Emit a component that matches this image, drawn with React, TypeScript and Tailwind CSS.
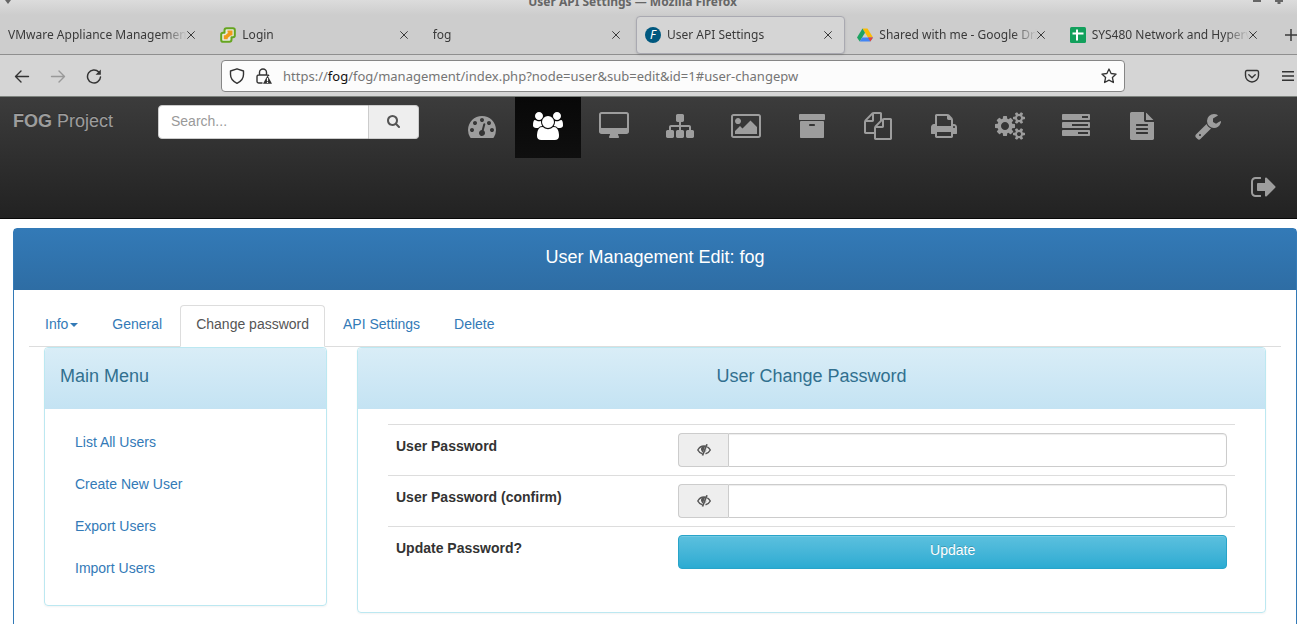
import type { ReactNode } from "react";

const PATHS = {
  search: "M1216 832q0-185-131.5-316.5t-316.5-131.5-316.5 131.5-131.5 316.5 131.5 316.5 316.5 131.5 316.5-131.5 131.5-316.5zm512 832q0 52-38 90t-90 38q-54 0-90-38l-343-342q-179 124-399 124-143 0-273.5-55.5t-225-150-150-225-55.5-273.5 55.5-273.5 150-225 225-150 273.5-55.5 273.5 55.5 225 150 150 225 55.5 273.5q0 220-124 399l343 343q37 37 37 90z",
  dashboard: "M384 1152q0-53-37.5-90.5t-90.5-37.5-90.5 37.5-37.5 90.5 37.5 90.5 90.5 37.5 90.5-37.5 37.5-90.5zm192-448q0-53-37.5-90.5t-90.5-37.5-90.5 37.5-37.5 90.5 37.5 90.5 90.5 37.5 90.5-37.5 37.5-90.5zm428 481l101-382q6-26-7.5-48.5t-38.5-29.5-48 6.5-30 39.5l-101 382q-60 5-107 43.5t-63 98.5q-20 77 20 146t117 89 146-20 89-117q16-60-6-117t-72-91zm660-33q0-53-37.5-90.5t-90.5-37.5-90.5 37.5-37.5 90.5 37.5 90.5 90.5 37.5 90.5-37.5 37.5-90.5zm-640-640q0-53-37.5-90.5t-90.5-37.5-90.5 37.5-37.5 90.5 37.5 90.5 90.5 37.5 90.5-37.5 37.5-90.5zm448 192q0-53-37.5-90.5t-90.5-37.5-90.5 37.5-37.5 90.5 37.5 90.5 90.5 37.5 90.5-37.5 37.5-90.5zm320 448q0 261-141 483-19 29-54 29h-1402q-35 0-54-29-141-221-141-483 0-182 71-348t191-286 286-191 348-71 348 71 286 191 191 286 71 348z",
  users: "M593 896q-162 5-265 128h-134q-82 0-138-40.5t-56-118.5q0-353 124-353 6 0 43.5 21t97.5 42.5 119 21.5q67 0 133-23-5 37-5 66 0 139 81 256zm1071 637q0 120-73 189.5t-194 69.5h-874q-121 0-194-69.5t-73-189.5q0-53 3.5-103.5t14-109 26.5-108.5 43-97.5 62-81 85.5-53.5 111.5-20q10 0 43 21.5t73 48 107 48 135 21.5 135-21.5 107-48 73-48 43-21.5q61 0 111.5 20t85.5 53.5 62 81 43 97.5 26.5 108.5 14 109 3.5 103.5zm-1024-1277q0 106-75 181t-181 75-181-75-75-181 75-181 181-75 181 75 75 181zm704 384q0 159-112.5 271.5t-271.5 112.5-271.5-112.5-112.5-271.5 112.5-271.5 271.5-112.5 271.5 112.5 112.5 271.5zm576 225q0 78-56 118.5t-138 40.5h-134q-103-123-265-128 81-117 81-256 0-29-5-66 66 23 133 23 59 0 119-21.5t97.5-42.5 43.5-21q124 0 124 353zm-128-609q0 106-75 181t-181 75-181-75-75-181 75-181 181-75 181 75 75 181z",
  desktop: "M1792 992v-832q0-13-9.5-22.5t-22.5-9.5h-1600q-13 0-22.5 9.5t-9.5 22.5v832q0 13 9.5 22.5t22.5 9.5h1600q13 0 22.5-9.5t9.5-22.5zm128-832v1088q0 66-47 113t-113 47h-544q0 37 16 77.5t32 71 16 43.5q0 26-19 45t-45 19h-512q-26 0-45-19t-19-45q0-14 16-44t32-70 16-78h-544q-66 0-113-47t-47-113v-1088q0-66 47-113t113-47h1600q66 0 113 47t47 113z",
  sitemap: "M1792 1248v320q0 40-28 68t-68 28h-320q-40 0-68-28t-28-68v-320q0-40 28-68t68-28h96v-192h-512v192h96q40 0 68 28t28 68v320q0 40-28 68t-68 28h-320q-40 0-68-28t-28-68v-320q0-40 28-68t68-28h96v-192h-512v192h96q40 0 68 28t28 68v320q0 40-28 68t-68 28h-320q-40 0-68-28t-28-68v-320q0-40 28-68t68-28h96v-192q0-52 38-90t90-38h512v-192h-96q-40 0-68-28t-28-68v-320q0-40 28-68t68-28h320q40 0 68 28t28 68v320q0 40-28 68t-68 28h-96v192h512q52 0 90 38t38 90v192h96q40 0 68 28t28 68z",
  image: "M640 576q0 80-56 136t-136 56-136-56-56-136 56-136 136-56 136 56 56 136zm1024 384v448h-1408v-192l320-320 160 160 512-512zm96-704h-1600q-13 0-22.5 9.5t-9.5 22.5v1216q0 13 9.5 22.5t22.5 9.5h1600q13 0 22.5-9.5t9.5-22.5v-1216q0-13-9.5-22.5t-22.5-9.5zm160 32v1216q0 66-47 113t-113 47h-1600q-66 0-113-47t-47-113v-1216q0-66 47-113t113-47h1600q66 0 113 47t47 113z",
  archive: "M1088 832q0-26-19-45t-45-19h-256q-26 0-45 19t-19 45 19 45 45 19h256q26 0 45-19t19-45zm576-192v960q0 26-19 45t-45 19h-1408q-26 0-45-19t-19-45v-960q0-26 19-45t45-19h1408q26 0 45 19t19 45zm64-448v256q0 26-19 45t-45 19h-1536q-26 0-45-19t-19-45v-256q0-26 19-45t45-19h1536q26 0 45 19t19 45z",
  files: "M1696 384q40 0 68 28t28 68v1216q0 40-28 68t-68 28h-960q-40 0-68-28t-28-68v-288h-544q-40 0-68-28t-28-68v-672q0-40 20-88t48-76l408-408q28-28 76-48t88-20h416q40 0 68 28t28 68v328q68-40 128-40h416zm-544 213l-299 299h299v-299zm-640-384l-299 299h299v-299zm196 647l316-316v-416h-384v416q0 40-28 68t-68 28h-416v640h512v-256q0-40 20-88t48-76zm956 804v-1152h-384v416q0 40-28 68t-68 28h-416v640h896z",
  print: "M448 1536h896v-256h-896v256zm0-640h896v-384h-160q-40 0-68-28t-28-68v-160h-640v640zm1152 64q0-26-19-45t-45-19-45 19-19 45 19 45 45 19 45-19 19-45zm128 0v416q0 13-9.5 22.5t-22.5 9.5h-224v160q0 40-28 68t-68 28h-960q-40 0-68-28t-28-68v-160h-224q-13 0-22.5-9.5t-9.5-22.5v-416q0-79 56.5-135.5t135.5-56.5h64v-544q0-40 28-68t68-28h672q40 0 88 20t76 48l152 152q28 28 48 76t20 88v256h64q79 0 135.5 56.5t56.5 135.5z",
  cogs: "M896 896q0-106-75-181t-181-75-181 75-75 181 75 181 181 75 181-75 75-181zm768 512q0-52-38-90t-90-38-90 38-38 90q0 53 37.5 90.5t90.5 37.5 90.5-37.5 37.5-90.5zm0-1024q0-52-38-90t-90-38-90 38-38 90q0 53 37.5 90.5t90.5 37.5 90.5-37.5 37.5-90.5zm-384 421v185q0 10-7 19.5t-16 10.5l-155 24q-11 35-32 76 34 48 90 115 7 11 7 20 0 12-7 19-23 30-82.5 89.5t-78.5 59.5q-11 0-21-7l-115-90q-37 19-77 31-11 108-23 155-7 24-30 24h-186q-11 0-20-7.5t-10-17.5l-23-153q-34-10-75-31l-118 89q-7 7-20 7-11 0-21-8-144-133-144-160 0-9 7-19 10-14 41-53t47-61q-23-44-35-82l-152-24q-10-1-17-9.5t-7-19.5v-185q0-10 7-19.5t16-10.5l155-24q11-35 32-76-34-48-90-115-7-11-7-20 0-12 7-20 22-30 82-89t79-59q11 0 21 7l115 90q34-18 77-32 11-108 23-154 7-24 30-24h186q11 0 20 7.5t10 17.5l23 153q34 10 75 31l118-89q8-7 20-7 11 0 21 8 144 133 144 160 0 8-7 19-12 16-42 54t-45 60q23 48 34 82l152 23q10 2 17 10.5t7 19.5zm640 533v140q0 16-149 31-12 27-30 52 51 113 51 138 0 4-4 7-122 71-124 71-8 0-46-47t-52-68q-20 2-30 2t-30-2q-14 21-52 68t-46 47q-2 0-124-71-4-3-4-7 0-25 51-138-18-25-30-52-149-15-149-31v-140q0-16 149-31 13-29 30-52-51-113-51-138 0-4 4-7 4-2 35-20t59-34 30-16q8 0 46 46.5t52 67.5q20-2 30-2t30 2q51-71 92-112l6-2q4 0 124 70 4 3 4 7 0 25-51 138 17 23 30 52 149 15 149 31zm0-1024v140q0 16-149 31-12 27-30 52 51 113 51 138 0 4-4 7-122 71-124 71-8 0-46-47t-52-68q-20 2-30 2t-30-2q-14 21-52 68t-46 47q-2 0-124-71-4-3-4-7 0-25 51-138-18-25-30-52-149-15-149-31v-140q0-16 149-31 13-29 30-52-51-113-51-138 0-4 4-7 4-2 35-20t59-34 30-16q8 0 46 46.5t52 67.5q20-2 30-2t30 2q51-71 92-112l6-2q4 0 124 70 4 3 4 7 0 25-51 138 17 23 30 52 149 15 149 31z",
  tasks: "M1024 1408h640v-128h-640v128zm-384-512h1024v-128h-1024v128zm640-512h384v-128h-384v128zm512 832v256q0 26-19 45t-45 19h-1664q-26 0-45-19t-19-45v-256q0-26 19-45t45-19h1664q26 0 45 19t19 45zm0-512v256q0 26-19 45t-45 19h-1664q-26 0-45-19t-19-45v-256q0-26 19-45t45-19h1664q26 0 45 19t19 45zm0-512v256q0 26-19 45t-45 19h-1664q-26 0-45-19t-19-45v-256q0-26 19-45t45-19h1664q26 0 45 19t19 45z",
  report: "M1596 476q14 14 28 36h-472v-472q22 14 36 28zm-476 164h544v1056q0 40-28 68t-68 28h-1344q-40 0-68-28t-28-68v-1600q0-40 28-68t68-28h800v544q0 40 28 68t68 28zm160 736v-64q0-14-9-23t-23-9h-704q-14 0-23 9t-9 23v64q0 14 9 23t23 9h704q14 0 23-9t9-23zm0-256v-64q0-14-9-23t-23-9h-704q-14 0-23 9t-9 23v64q0 14 9 23t23 9h704q14 0 23-9t9-23zm0-256v-64q0-14-9-23t-23-9h-704q-14 0-23 9t-9 23v64q0 14 9 23t23 9h704q14 0 23-9t9-23z",
  wrench: "M448 1472q0-26-19-45t-45-19-45 19-19 45 19 45 45 19 45-19 19-45zm644-420l-682 682q-37 37-90 37-52 0-91-37l-106-108q-38-36-38-90 0-53 38-91l681-681q39 98 114.5 173.5t173.5 114.5zm634-435q0 39-23 106-47 134-164.5 217.5t-258.5 83.5q-185 0-316.5-131.5t-131.5-316.5 131.5-316.5 316.5-131.5q58 0 121.5 16.5t107.5 46.5q16 11 16 28t-16 28l-293 169v224l193 107q5-3 79-48.5t135.5-81 70.5-35.5q15 0 23.5 10t8.500 25z",
  signOut: "M704 1440q0 4 1 20t.5 26.5-3 23.5-10 19.5-20.5 6.5h-320q-119 0-203.5-84.5t-84.5-203.5v-704q0-119 84.5-203.5t203.5-84.5h320q13 0 22.5 9.5t9.5 22.5q0 4 1 20t.5 26.5-3 23.5-10 19.5-20.5 6.5h-320q-66 0-113 47t-47 113v704q0 66 47 113t113 47h312l11.5 1 11.5 3 8 5.5 7 9 2 13.5zm928-544q0 26-19 45l-544 544q-19 19-45 19t-45-19-19-45v-288h-448q-26 0-45-19t-19-45v-384q0-26 19-45t45-19h448v-288q0-26 19-45t45-19 45 19l544 544q19 19 19 45z",
};

type IconName = keyof typeof PATHS;

const NAV: { icon: IconName; label: string; wide?: boolean; active?: boolean }[] = [
  { icon: "dashboard", label: "Dashboard" },
  { icon: "users", label: "Users", wide: true, active: true },
  { icon: "desktop", label: "Hosts", wide: true },
  { icon: "sitemap", label: "Groups" },
  { icon: "image", label: "Images", wide: true },
  { icon: "archive", label: "Storage" },
  { icon: "files", label: "Snapins" },
  { icon: "print", label: "Printers" },
  { icon: "cogs", label: "Services", wide: true },
  { icon: "tasks", label: "Tasks" },
  { icon: "report", label: "Reports" },
  { icon: "wrench", label: "Configuration" },
];

function NavIcon({ icon, wide }: { icon: IconName; wide?: boolean }) {
  return (
    <svg
      aria-hidden="true"
      viewBox={wide ? "0 0 1920 1792" : "0 0 1792 1792"}
      className={wide ? "h-7 w-[30px] fill-current" : "size-7 fill-current"}
    >
      <path d={PATHS[icon]} />
    </svg>
  );
}

function CloseButton() {
  return (
    <button type="button" aria-label="Close tab" className="shrink-0 text-[#3a3a3a]">
      <svg viewBox="0 0 8 8" className="size-2" stroke="currentColor" fill="none">
        <path d="M.3.3 7.7 7.7M7.7.3.3 7.7" />
      </svg>
    </button>
  );
}

function BrowserTab({ title, icon, active }: { title: string; icon?: ReactNode; active?: boolean }) {
  return (
    <div
      className={
        "flex h-[38px] min-w-0 flex-1 items-center rounded border pr-3 pl-2 " +
        (active ? "border-[#a9a9b1] bg-[#d5d5d5] shadow-sm" : "border-transparent")
      }
    >
      {icon && <span className="mr-1.5 flex size-4 shrink-0">{icon}</span>}
      <span className="min-w-0 flex-1 overflow-hidden mask-[linear-gradient(to_right,#000_calc(100%-24px),transparent)] whitespace-nowrap">
        {title}
      </span>
      <CloseButton />
    </div>
  );
}

function VmIcon() {
  return (
    <svg viewBox="0 0 16 16" className="size-4" fill="none" strokeLinejoin="round">
      <path d="M6.500 1.200h6.500a1.800 1.800 0 0 1 1.800 1.800v5.500A1.800 1.800 0 0 1 13 10.300h-1.500v2.200A2.200 2.200 0 0 1 9.300 14.700H3a1.800 1.800 0 0 1-1.800-1.800V7.500A1.800 1.800 0 0 1 3 5.700h1.500V3.200a2 2 0 0 1 2-2z" fill="#e8ecdf" stroke="#65a51f" strokeWidth="2" />
      <path d="M7.500 3.500h5v4.700l-1.800.3-3 2.500v1.300H3.800V8.300h1.500l3.200-2.700h-1z" fill="#f09a1a" />
    </svg>
  );
}

function DriveIcon() {
  return (
    <svg viewBox="0 0 16 16" className="size-4">
      <path d="M5.500 1.500h5L16 10.500h-5z" fill="#fbbc04" />
      <path d="M5.500 1.500 8 5.800 2.700 14.500 0 10.500z" fill="#1ea362" />
      <path d="M5.100 10.500H16l-2.700 4H2.700z" fill="#4285f4" />
      <path d="M11 10.500h5l-2.700 4z" fill="#ea4335" />
    </svg>
  );
}

function SheetsIcon() {
  return (
    <svg viewBox="0 0 16 16" className="size-4">
      <rect width="16" height="16" rx="1.500" fill="#12a05c" />
      <path d="M2.500 6.500h11M7 2.500v11" stroke="#fff" strokeWidth="2" />
    </svg>
  );
}

function Browser() {
  return (
    <header className="shrink-0 overflow-hidden bg-[#cdcdcd] font-['Noto_Sans',sans-serif] text-xs text-[#3a3a3a]">
      <div className="flex h-[15px] items-start overflow-hidden bg-linear-to-b from-[#dcdcdc] to-[#cdcdcd]">
        <svg viewBox="0 0 8 4" className="ml-1 h-1 w-2 fill-[#666]"><path d="M1 0h6L4 4z" /></svg>
        <div className="-mt-2 flex-1 text-center leading-5 font-bold text-[#666]">
          User API Settings — Mozilla Firefox
        </div>
        <svg viewBox="0 0 30 4" className="mr-3.5 h-1 w-[30px] fill-[#666]"><path d="M0 0h8v2H0zM22 0h8v2h-2.500v2h-3V2H22z" /></svg>
      </div>
      <nav aria-label="Browser tabs" className="-ml-px flex h-10 items-center gap-[3px] border-b border-[#8f8f8f]">
        <BrowserTab title="VMware Appliance Management" />
        <BrowserTab title="Login" icon={<VmIcon />} />
        <BrowserTab title="fog" />
        <BrowserTab
          title="User API Settings"
          active
          icon={<span className="flex size-4 items-center justify-center rounded-full bg-[#00587f] text-xs leading-4 text-white italic">F</span>}
        />
        <BrowserTab title="Shared with me - Google Drive" icon={<DriveIcon />} />
        <BrowserTab title="SYS480 Network and Hypervisor" icon={<SheetsIcon />} />
        <button type="button" aria-label="New tab" className="w-6 shrink-0 pl-3">
          <svg viewBox="0 0 12 12" className="size-3" stroke="currentColor" strokeWidth="1.500"><path d="M6 0v12M0 6h12" /></svg>
        </button>
      </nav>
      <div className="flex h-[42px] items-center border-b border-[#7d827d] bg-[#d5d5d5]">
        <div className="flex w-[221px] shrink-0 items-center gap-5 pl-3.5">
          <button type="button" aria-label="Back">
            <svg viewBox="0 0 16 16" className="size-4" fill="none" stroke="#333" strokeWidth="1.400" strokeLinecap="round" strokeLinejoin="round"><path d="M14.500 8.500H1.500M7 3 1.500 8.500 7 14" /></svg>
          </button>
          <button type="button" aria-label="Forward">
            <svg viewBox="0 0 16 16" className="size-4" fill="none" stroke="#999" strokeWidth="1.400" strokeLinecap="round" strokeLinejoin="round"><path d="M1.500 8.500h13M9 3l5.500 5.500L9 14" /></svg>
          </button>
          <button type="button" aria-label="Reload">
            <svg viewBox="0 0 16 16" className="size-4" fill="none" stroke="#333" strokeWidth="1.500" strokeLinecap="round"><path d="M14.500 9A6.500 6.500 0 1 1 12.800 4.100" /><path d="M14.800 1.500v5.200H9.600z" fill="#333" stroke="none" /></svg>
          </button>
        </div>
        <div className="flex h-8 min-w-0 flex-1 items-center rounded border border-[#868686] bg-[#fcfcfc] px-[7px] text-[13px]">
          <svg viewBox="0 0 16 16" className="size-4 shrink-0" fill="none" stroke="#333" strokeWidth="1.400" strokeLinejoin="round"><path d="M8 .8 14.500 3v3.500c0 4-2.500 7-6.500 8.800C4 13.500 1.500 10.500 1.500 6.500V3z" /></svg>
          <svg viewBox="0 0 16 16" className="ml-[11px] size-4 shrink-0" fill="none" stroke="#333" strokeWidth="1.400"><path d="M3.500 7V4.500a3.500 3.500 0 0 1 7 0V7M6.500 15H2.800A1.800 1.800 0 0 1 1 13.200V8.800A1.800 1.800 0 0 1 2.800 7h8.400q1.300 0 1.700 1" /><path d="m11.500 7.500 4.500 8.300H7z" fill="#333" stroke="none" /><path d="M11.500 10v3M11.500 13.700v1.200" stroke="#fff" strokeWidth="1.200" /></svg>
          <a href="#user-changepw" className="ml-[11px] min-w-0 flex-1 truncate pt-0.5 text-[#757575]">
            https://<span className="text-[#111]">fog</span>/fog/management/index.php?node=user&amp;sub=edit&amp;id=1#user-changepw
          </a>
          <button type="button" aria-label="Bookmark this page">
            <svg viewBox="0 0 16 16" className="size-4" fill="none" stroke="#333" strokeWidth="1.300" strokeLinejoin="round"><path d="m8 1 2.100 4.500 5 .6-3.700 3.400 1 5L8 12.100l-4.400 2.400 1-5L.9 6.100l5-.6z" /></svg>
          </button>
        </div>
        <div className="flex w-[172px] shrink-0 items-center justify-end gap-5 overflow-hidden pr-px">
          <button type="button" aria-label="Save to Pocket">
            <svg viewBox="0 0 16 16" className="size-4" fill="none" stroke="#333" strokeWidth="1.400" strokeLinecap="round" strokeLinejoin="round"><path d="M2.800 2.500h10.400a1.500 1.500 0 0 1 1.300 1.500v3.500a6.500 6.500 0 0 1-13 0V4a1.500 1.500 0 0 1 1.300-1.500zM4.800 6.700 8 9.700l3.200-3" /></svg>
          </button>
          <button type="button" aria-label="Application menu">
            <svg viewBox="0 0 16 16" className="size-4" stroke="#333" strokeWidth="1.400"><path d="M2 3.800h12M2 8h12M2 12.200h12" /></svg>
          </button>
        </div>
      </div>
    </header>
  );
}

function Navbar() {
  return (
    <div className="shrink-0 border-b border-[#080808] bg-linear-to-b from-[#3c3c3c] to-[#222] text-[#9d9d9d]">
      <div className="flex h-[61px] items-start">
        <a href="#home" className="w-[158px] shrink-0 pt-3.5 pl-[13px] text-lg leading-5 text-shadow-[0_-1px_0_rgb(0_0_0/0.25)]">
          <b>FOG</b> Project
        </a>
        <form className="mt-2 flex w-[261px] shrink-0" onSubmit={(e) => e.preventDefault()}>
          <input
            type="search"
            aria-label="Search"
            placeholder="Search..."
            className="h-[34px] w-[211px] rounded-l border border-[#ccc] bg-white px-3 pb-0.5 text-sm text-[#555] placeholder:text-[#999]"
          />
          <button type="submit" aria-label="Search" className="flex h-[34px] flex-1 items-center justify-center rounded-r border border-l-0 border-[#ccc] bg-[#eee] pb-0.5 text-[#555]">
            <svg viewBox="64 128 1664 1664" className="size-[13px] fill-current"><path d={PATHS.search} /></svg>
          </button>
        </form>
        <nav aria-label="Sections" className="ml-[30px] flex h-full">
          {NAV.map((n) => (
            <a
              key={n.icon}
              href={"#" + n.icon}
              aria-label={n.label}
              className={
                "flex w-[66px] items-start justify-center pt-[15px] " +
                (n.active ? "bg-linear-to-b from-[#080808] to-[#0f0f0f] text-white" : "")
              }
            >
              <NavIcon icon={n.icon} wide={n.wide} />
            </a>
          ))}
        </nav>
      </div>
      <div className="flex h-[60px] justify-end">
        <a href="#logout" aria-label="Log out" className="flex w-[66px] items-start justify-center pt-[15px]">
          <NavIcon icon="signOut" />
        </a>
      </div>
    </div>
  );
}

function EyeClose() {
  return (
    <svg viewBox="0 0 14 14" className="h-3.5 w-3.5" fill="none" stroke="#555" strokeWidth="1.400">
      <path d="M5.500 10.800C3.200 10.200 1.500 8.500.8 7 2 4.800 4.500 3 7 3q1 0 1.800.2M10.300 3.900c1.400.7 2.400 1.900 3 3.100-.8 1.700-2.600 3.200-4.800 3.800" />
      <path d="M8.200 3C5 2.600 3.600 4.800 4 6.700c.3 1.200 1 2.100 2 2.600z" fill="#555" stroke="none" />
      <path d="M10 1.300 5.500 12.500" strokeWidth="1.700" />
      <path d="M9.300 6.300 8.200 9q1.300-.8 1.100-2.700z" fill="#555" stroke="none" />
    </svg>
  );
}

function PasswordRow({ id, label }: { id: string; label: string }) {
  return (
    <tr className="border-t border-[#ddd]">
      <th scope="row" className="w-1/3 px-2 pt-[11px] pb-2 text-left align-top leading-5 font-bold">
        <label htmlFor={id}>{label}</label>
      </th>
      <td className="p-2">
        <div className="flex h-[34px]">
          <button type="button" aria-label={"Show " + label} className="flex w-[50px] shrink-0 items-center justify-center rounded-l border border-r-0 border-[#ccc] bg-[#eee]">
            <EyeClose />
          </button>
          <input id={id} type="password" className="min-w-0 flex-1 rounded-r border border-[#ccc] bg-white px-3 shadow-[inset_0_1px_1px_rgb(0_0_0/0.075)]" />
        </div>
      </td>
    </tr>
  );
}

const TABS = ["General", "Change password", "API Settings", "Delete"];
const MENU = ["List All Users", "Create New User", "Export Users", "Import Users"];

export default function App() {
  return (
    <div className="flex h-screen flex-col overflow-hidden bg-white font-['Liberation_Sans',Arial,sans-serif] text-sm text-[#333]">
      <Browser />
      <Navbar />
      <main className="mt-[9px] ml-[13px] flex-1 rounded-t border border-[#337ab7]">
        <h1 className="flex h-[61px] items-center justify-center bg-linear-to-b from-[#337ab7] to-[#2e6da4] pb-1.5 text-lg leading-5 text-white">
          User Management Edit: fog
        </h1>
        <div className="p-[15px]">
          <nav aria-label="User settings" className="flex h-[42px] gap-0.5 border-b border-[#ddd] text-[#337ab7]">
            <button type="button" className="flex h-[42px] items-center px-4 pb-1">
              Info
              <span className="mt-0.5 ml-0.5 border-x-4 border-t-4 border-x-transparent border-t-[#337ab7]" />
            </button>
            {TABS.map((t) => (
              <a
                key={t}
                href={"#" + t}
                className={
                  "flex h-[42px] items-center rounded-t border px-[15px] pb-1 " +
                  (t === "Change password" ? "border-[#ddd] border-b-white bg-white text-[#555]" : "border-transparent")
                }
              >
                {t}
              </a>
            ))}
          </nav>
          <div className="flex items-start">
            <div className="w-1/4 px-[15px]">
              <section className="rounded border border-[#bce8f1] shadow-xs">
                <h2 className="flex h-[61px] items-center rounded-t bg-linear-to-b from-[#d9edf7] to-[#c4e3f3] px-[15px] pb-1.5 text-lg leading-5 text-[#31708f]">
                  Main Menu
                </h2>
                <ul className="px-[15px] pt-[13px] pb-[15px]">
                  {MENU.map((m) => (
                    <li key={m} className="mb-0.5">
                      <a href={"#" + m} className="block px-[15px] py-2.5 leading-5 text-[#337ab7]">{m}</a>
                    </li>
                  ))}
                </ul>
              </section>
            </div>
            <div className="w-3/4 px-[15px]">
              <section className="rounded border border-[#bce8f1] shadow-xs">
                <h2 className="flex h-[61px] items-center justify-center rounded-t bg-linear-to-b from-[#d9edf7] to-[#c4e3f3] pb-1.5 text-lg leading-5 text-[#31708f]">
                  User Change Password
                </h2>
                <form className="px-[30px] pt-[15px] pb-[35px]" onSubmit={(e) => e.preventDefault()}>
                  <table className="w-full table-fixed border-collapse">
                    <tbody>
                      <PasswordRow id="password" label="User Password" />
                      <PasswordRow id="password-confirm" label="User Password (confirm)" />
                      <tr className="border-t border-[#ddd]">
                        <th scope="row" className="w-1/3 px-2 pt-[11px] pb-2 text-left align-top leading-5 font-bold">
                          <label htmlFor="update">Update Password?</label>
                        </th>
                        <td className="p-2">
                          <button
                            id="update"
                            type="submit"
                            className="block h-[34px] w-full rounded border border-[#28a4c9] bg-linear-to-b from-[#5bc0de] to-[#2aabd2] pb-1 text-white shadow-[inset_0_1px_0_rgb(255_255_255/0.15)] text-shadow-[0_-1px_0_rgb(0_0_0/0.2)]"
                          >
                            Update
                          </button>
                        </td>
                      </tr>
                    </tbody>
                  </table>
                </form>
              </section>
            </div>
          </div>
        </div>
      </main>
    </div>
  );
}
